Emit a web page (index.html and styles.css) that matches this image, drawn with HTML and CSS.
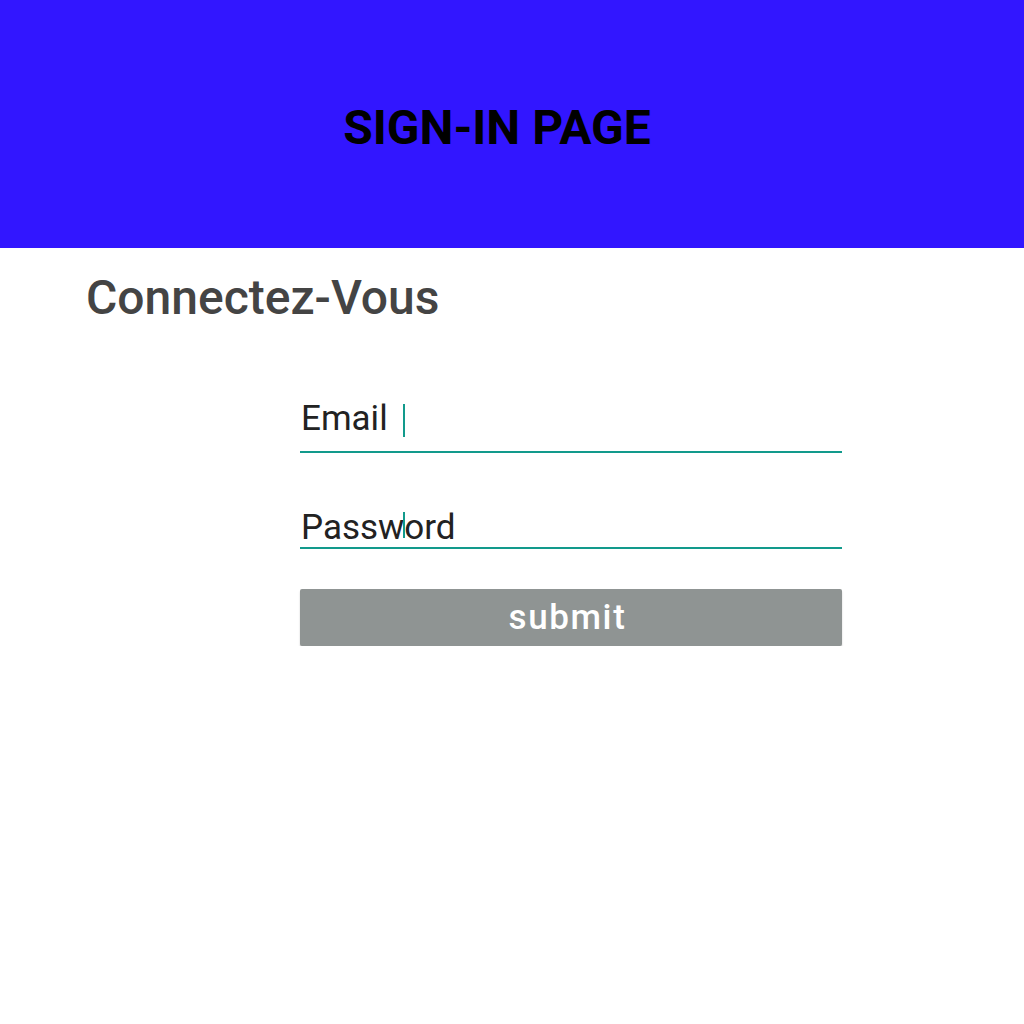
FILE: index.html
```html
<!DOCTYPE html>
<html>
<head>
<meta charset="utf-8">
<link rel="stylesheet" href="styles.css">
</head>
<body>
<header class="banner">
  <h1 class="banner-title">SIGN-IN PAGE</h1>
</header>
<main class="content">
  <h2 class="subtitle">Connectez-Vous</h2>
  <form class="form">
    <div class="field field-email">
      <span class="label">Email</span>
      <span class="cursor cursor-email"></span>
    </div>
    <div class="field field-password">
      <span class="label">Password</span>
      <span class="cursor cursor-password"></span>
    </div>
    <div class="button">submit</div>
  </form>
</main>
</body>
</html>
```
FILE: styles.css
```css
html, body {
  margin: 0;
  padding: 0;
  background: #ffffff;
  font-family: Roboto, "Noto Sans", sans-serif;
}
.banner {
  height: 248px;
  background: #3216ff;
  display: flex;
  align-items: center;
  justify-content: center;
}
.banner-title {
  margin: 0 30px 0 0;
  font-size: 48px;
  font-weight: 700;
  color: #000;
  position: relative;
  top: 3px;
}
.content {
  padding: 0 0 0 86px;
}
.subtitle {
  margin: 23px 0 0 0;
  font-size: 48px;
  font-weight: 500;
  color: #444444;
  line-height: 54px;
}
.form {
  margin: 0 0 0 214px;
  width: 542px;
  padding-top: 71px;
}
.field {
  position: relative;
  border-bottom: 2px solid #129a8c;
  font-size: 35px;
  color: #222;
}
.field-email {
  height: 55px;
}
.field-email .label {
  position: absolute;
  left: 1px;
  top: 3px;
  line-height: 40px;
}
.field-password {
  margin-top: 56px;
  height: 38px;
}
.field-password .label {
  position: absolute;
  left: 1px;
  top: -1px;
  line-height: 40px;
}
.cursor {
  position: absolute;
  width: 2px;
  background: #129a8c;
  left: 103px;
}
.cursor-email {
  top: 8px;
  height: 33px;
}
.cursor-password {
  top: 3px;
  height: 26px;
}
.button {
  margin-top: 40px;
  height: 57px;
  background: #8f9493;
  color: #ffffff;
  border-radius: 2px;
  box-shadow: 0 2px 2px rgba(0,0,0,0.2);
  display: flex;
  align-items: center;
  justify-content: center;
  padding-right: 7px;
  font-size: 35px;
  font-weight: 500;
  letter-spacing: 1.6px;
}
```
